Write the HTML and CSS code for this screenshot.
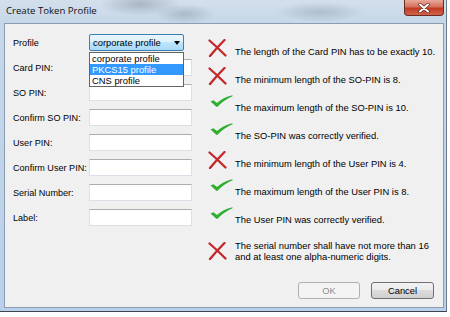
FILE: index.html
```html
<!DOCTYPE html>
<html>
  <head>
    <title>Create Token Profile</title>
    <link rel="stylesheet" href="styles.css">
  </head>
  <body>
    <div class="window">
      <div class="titlebar">
        <span class="title">Create Token Profile</span>
        <div class="close">
          <svg width="12" height="10" viewBox="0 0 12 10">
            <path d="M2 1.5 L10 8.5 M10 1.5 L2 8.5" stroke="#5a2a24" stroke-width="3.4" stroke-linecap="round" />
            <path d="M2 1.5 L10 8.5 M10 1.5 L2 8.5" stroke="#ffffff" stroke-width="2" stroke-linecap="round" />
          </svg>
        </div>
      </div>
      <div class="client">
        <div class="main">
          <div class="form">
            <div class="row">
              <label>Profile</label>
              <div class="combo">corporate profile<span class="arrow"></span></div>
            </div>
            <div class="row"><label>Card PIN:</label><input class="field" type="text" /></div>
            <div class="row"><label>SO PIN:</label><input class="field" type="text" /></div>
            <div class="row"><label>Confirm SO PIN:</label><input class="field" type="text" /></div>
            <div class="row"><label>User PIN:</label><input class="field" type="text" /></div>
            <div class="row"><label>Confirm User PIN:</label><input class="field" type="text" /></div>
            <div class="row"><label>Serial Number:</label><input class="field" type="text" /></div>
            <div class="row"><label>Label:</label><input class="field" type="text" /></div>
          </div>
          <ul class="messages">
            <li class="msg">
              <span class="icon"><svg class="cross" width="19" height="18" viewBox="0 0 19 18"><path d="M1.5 1.5 Q9 8 17.5 16.5 M16.5 1 Q9 8.5 2 17" stroke="#c3262c" stroke-width="2.3" stroke-linecap="round" fill="none" /></svg></span>
              <span>The length of the Card PIN has to be exactly 10.</span>
            </li>
            <li class="msg">
              <span class="icon"><svg class="cross" width="19" height="18" viewBox="0 0 19 18"><path d="M1.5 1.5 Q9 8 17.5 16.5 M16.5 1 Q9 8.5 2 17" stroke="#c3262c" stroke-width="2.3" stroke-linecap="round" fill="none" /></svg></span>
              <span>The minimum length of the SO-PIN is 8.</span>
            </li>
            <li class="msg">
              <span class="icon"><svg class="check" width="23" height="12" viewBox="0 0 23 12"><path d="M0.5 6.5 L3.5 5.2 L7 8 Q13 2.5 22.5 0.3 L22.5 1.3 Q14 5 7.5 11.8 L6.3 11.8 Z" fill="#2fae2f" /></svg></span>
              <span>The maximum length of the SO-PIN is 10.</span>
            </li>
            <li class="msg">
              <span class="icon"><svg class="check" width="23" height="12" viewBox="0 0 23 12"><path d="M0.5 6.5 L3.5 5.2 L7 8 Q13 2.5 22.5 0.3 L22.5 1.3 Q14 5 7.5 11.8 L6.3 11.8 Z" fill="#2fae2f" /></svg></span>
              <span>The SO-PIN was correctly verified.</span>
            </li>
            <li class="msg">
              <span class="icon"><svg class="cross" width="19" height="18" viewBox="0 0 19 18"><path d="M1.5 1.5 Q9 8 17.5 16.5 M16.5 1 Q9 8.5 2 17" stroke="#c3262c" stroke-width="2.3" stroke-linecap="round" fill="none" /></svg></span>
              <span>The minimum length of the User PIN is 4.</span>
            </li>
            <li class="msg">
              <span class="icon"><svg class="check" width="23" height="12" viewBox="0 0 23 12"><path d="M0.5 6.5 L3.5 5.2 L7 8 Q13 2.5 22.5 0.3 L22.5 1.3 Q14 5 7.5 11.8 L6.3 11.8 Z" fill="#2fae2f" /></svg></span>
              <span>The maximum length of the User PIN is 8.</span>
            </li>
            <li class="msg">
              <span class="icon"><svg class="check" width="23" height="12" viewBox="0 0 23 12"><path d="M0.5 6.5 L3.5 5.2 L7 8 Q13 2.5 22.5 0.3 L22.5 1.3 Q14 5 7.5 11.8 L6.3 11.8 Z" fill="#2fae2f" /></svg></span>
              <span>The User PIN was correctly verified.</span>
            </li>
            <li class="msg tall">
              <span class="icon"><svg class="cross" width="19" height="18" viewBox="0 0 19 18"><path d="M1.5 1.5 Q9 8 17.5 16.5 M16.5 1 Q9 8.5 2 17" stroke="#c3262c" stroke-width="2.3" stroke-linecap="round" fill="none" /></svg></span>
              <span>The serial number shall have not more than 16<br>and at least one alpha-numeric digits.</span>
            </li>
          </ul>
        </div>
        <div class="buttons">
          <button class="btn" disabled>OK</button>
          <button class="btn">Cancel</button>
        </div>
        <ul class="dropdown">
          <li>corporate profile</li>
          <li class="selected">PKCS15 profile</li>
          <li>CNS profile</li>
        </ul>
      </div>
    </div>
  </body>
</html>
```

FILE: styles.css
```css
body {
  margin: 0;
  background-color: #ffffff;
  font-family: "Liberation Sans", Arial, sans-serif;
  font-size: 9.4px;
  color: #000000;
}

.window {
  width: 447px;
  height: 312px;
  box-sizing: border-box;
  padding: 0 2px 3px 4px;
  display: flex;
  flex-direction: column;
  border-right: 1px solid #6b7c8f;
  border-bottom: 1px solid #3c4450;
  background:
    radial-gradient(ellipse 40px 12px at 140px 4px, rgba(120, 135, 150, 0.45), transparent),
    radial-gradient(ellipse 30px 10px at 185px 14px, rgba(110, 125, 140, 0.35), transparent),
    radial-gradient(ellipse 45px 10px at 320px 12px, rgba(120, 135, 150, 0.35), transparent),
    linear-gradient(to bottom, #d3dfeb 0, #c6d7e9 24px, #b9d0e8 100%);
}

.titlebar {
  height: 23px;
  display: flex;
  justify-content: space-between;
  align-items: flex-start;
}

.title {
  font-family: "Open Sans", sans-serif;
  font-size: 9.6px;
  padding: 4px 0 0 2px;
  color: #111111;
}

.close {
  width: 40px;
  height: 16px;
  box-sizing: border-box;
  border: 1px solid #6b2c22;
  border-top: none;
  border-radius: 0 0 4px 4px;
  background: linear-gradient(to bottom, #e9a99a 0, #d5705c 45%, #c13a22 55%, #d2644c 100%);
  display: flex;
  justify-content: center;
  align-items: center;
}

.client {
  flex: 1;
  border: 1px solid #8a9db5;
  background-color: #f0f0f0;
  position: relative;
  display: flex;
  flex-direction: column;
}

.main {
  flex: 1;
  display: flex;
  padding: 10px 0 0 8px;
}

.form {
  display: flex;
  flex-direction: column;
  gap: 8px;
  flex-shrink: 0;
}

.row {
  display: flex;
  align-items: center;
  height: 17px;
}

.row label {
  width: 76px;
  flex-shrink: 0;
  white-space: nowrap;
  font-size: 9.1px;
}

.field {
  width: 103px;
  height: 17px;
  flex-shrink: 0;
  box-sizing: border-box;
  margin: 0;
  border: 1px solid #dbdfe6;
  border-top-color: #abadb3;
  background-color: #ffffff;
}

.combo {
  width: 95px;
  height: 17px;
  flex-shrink: 0;
  box-sizing: border-box;
  border: 1px solid #3c7fb1;
  border-radius: 2px;
  background: linear-gradient(to bottom, #eaf6fd 0, #d9f0fc 50%, #bee6fd 50%, #a7d9f5 100%);
  padding-left: 3px;
  display: flex;
  align-items: center;
  justify-content: space-between;
}

.arrow {
  width: 0;
  height: 0;
  margin-right: 3px;
  border-left: 3.5px solid transparent;
  border-right: 3.5px solid transparent;
  border-top: 4px solid #000000;
}

.messages {
  list-style: none;
  margin: 3px 0 0 16px;
  padding: 0;
}

.msg {
  display: flex;
  align-items: center;
  height: 28px;
  white-space: nowrap;
}

.msg.tall {
  height: 35px;
  line-height: 11px;
}

.icon {
  width: 27px;
  flex-shrink: 0;
  align-self: flex-start;
  margin-top: 2px;
  display: flex;
}

.msg.tall .icon {
  align-self: center;
  margin-top: 0;
}

.icon .check {
  margin-left: 2px;
}

.buttons {
  display: flex;
  justify-content: flex-end;
  gap: 11px;
  padding: 0 9px 8px 0;
}

.btn {
  width: 63px;
  height: 17px;
  box-sizing: border-box;
  padding: 0;
  font-family: "Liberation Sans", Arial, sans-serif;
  font-size: 9.4px;
  color: #000000;
  border: 1px solid #707070;
  border-radius: 3px;
  background: linear-gradient(to bottom, #f2f2f2 0, #ebebeb 50%, #dddddd 50%, #cfcfcf 100%);
}

.btn:disabled {
  width: 62px;
  color: #8d8d8d;
  border-color: #adb2b5;
  background: #f4f4f4;
}

.dropdown {
  position: absolute;
  left: 84px;
  top: 28px;
  width: 95px;
  box-sizing: border-box;
  margin: 0;
  padding: 0;
  list-style: none;
  background-color: #ffffff;
  border: 1px solid #646464;
}

.dropdown li {
  height: 11px;
  line-height: 11px;
  padding-left: 2px;
}

.dropdown li.selected {
  background-color: #3399ff;
  color: #ffffff;
}
```
